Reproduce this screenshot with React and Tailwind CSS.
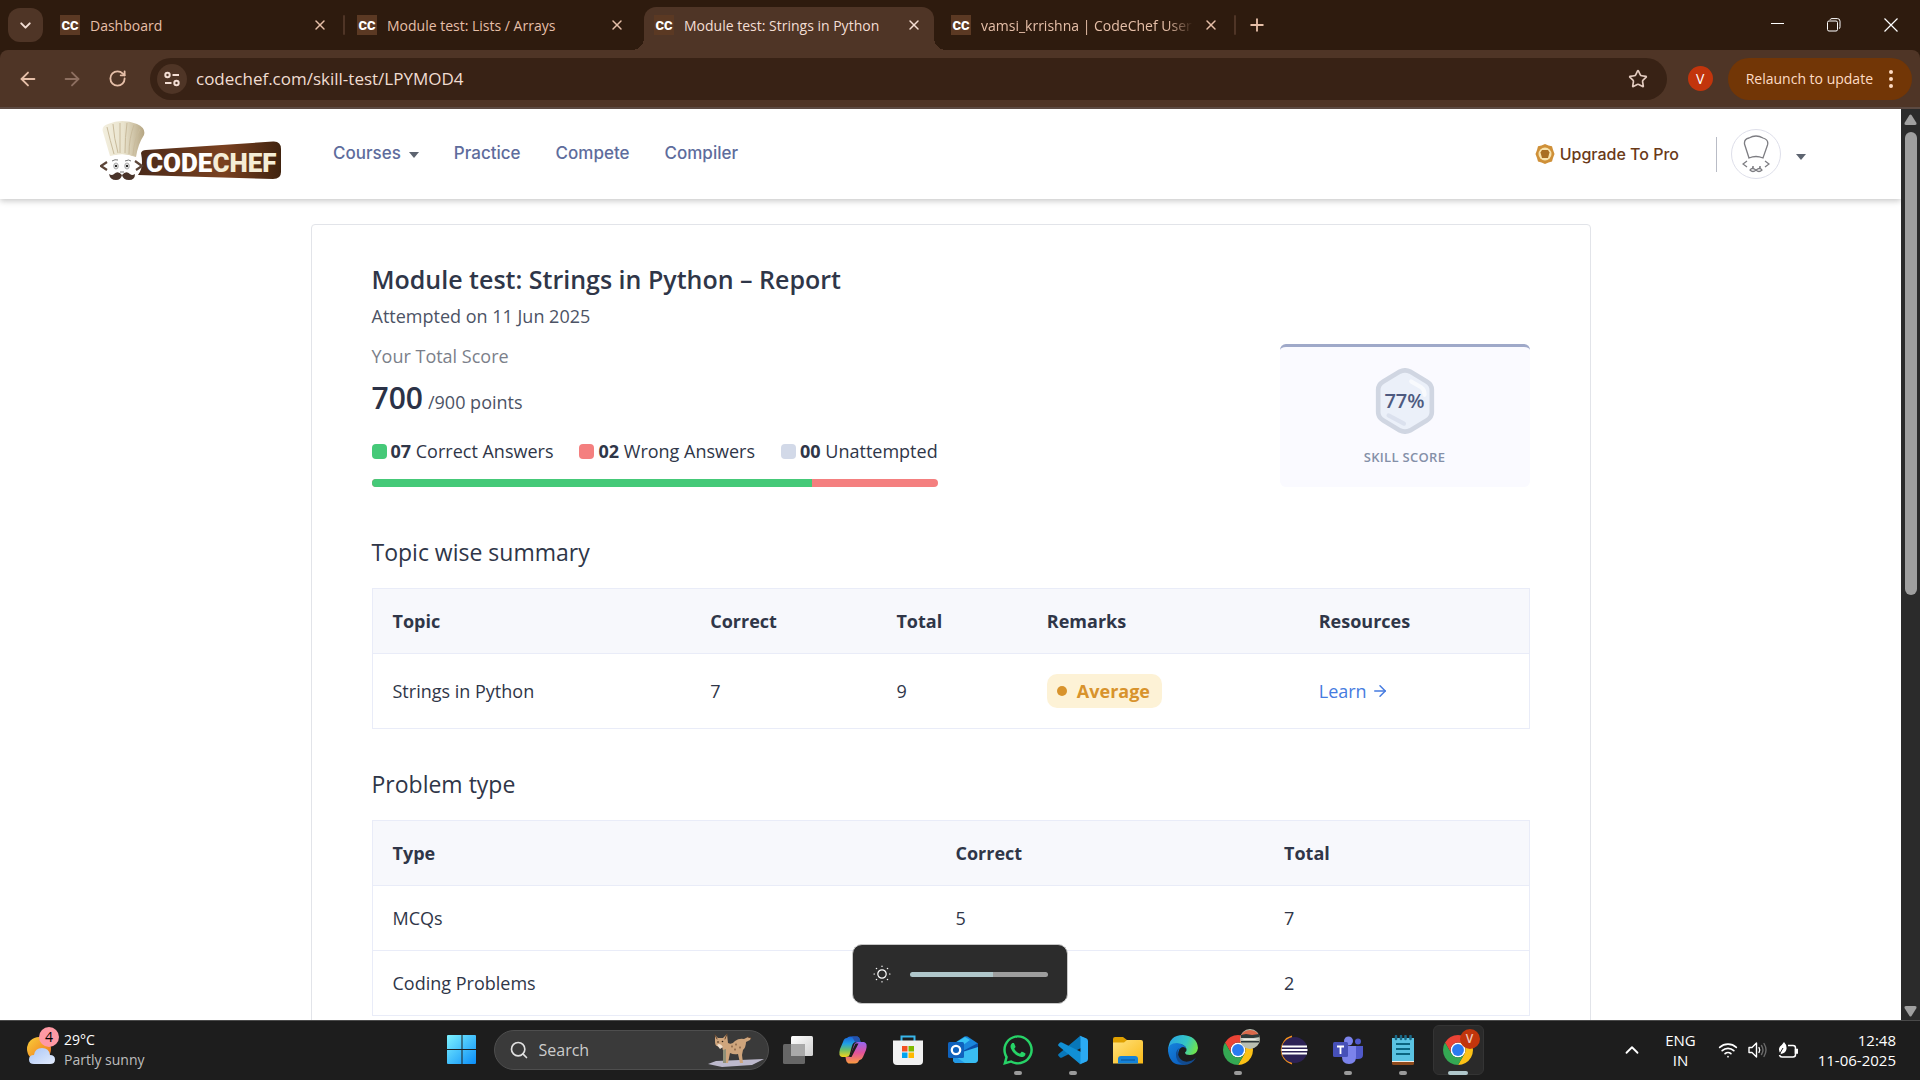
import React from "react";
import { FaWhatsapp } from "react-icons/fa";
import { ArrowLeft, ArrowRight, ChevronDown, ChevronUp, Plus, RotateCw, Search, Star, Wifi, X } from "lucide-react";

const UI = "font-['Open_Sans','Noto_Sans',sans-serif]";

function Favicon() {
  return (
    <span className="flex size-5 shrink-0 items-center justify-center bg-[#5b3923] font-['Roboto',sans-serif] text-[13px] leading-none font-black text-white">
      CC
    </span>
  );
}

function Tab({ title, active, fade }) {
  return (
    <div className={active ? "relative mt-[7px] flex h-[43px] w-[290px] items-center rounded-t-xl bg-[#4f3526] pr-3 pb-[7px] pl-2.5 text-[#f3ded4]" : "relative flex h-[50px] w-[290px] items-center pr-3 pl-2.5 text-[#e6bfa8]"}>
      {active && (
        <>
          <span className="absolute bottom-0 -left-3 size-3 bg-[radial-gradient(circle_at_0_0,transparent_12px,#4f3526_12px)]" />
          <span className="absolute -right-3 bottom-0 size-3 bg-[radial-gradient(circle_at_100%_0,transparent_12px,#4f3526_12px)]" />
        </>
      )}
      <Favicon />
      <span className={fade ? "ml-2.5 flex-1 overflow-hidden pt-px text-sm whitespace-nowrap [mask-image:linear-gradient(to_right,black_88%,transparent)]" : "ml-2.5 flex-1 overflow-hidden pt-px text-sm whitespace-nowrap"}>{title}</span>
      <button aria-label={`Close ${title}`} className="ml-2.5 flex size-4 items-center justify-center">
        <X size={16} strokeWidth={2.2} />
      </button>
    </div>
  );
}

function Divider({ shown }) {
  return <span className="flex w-[7px] shrink-0 justify-center">{shown && <span className="h-5 w-0.5 rounded bg-[#4f3526]" />}</span>;
}

function TabStrip() {
  return (
    <div className="flex h-[50px] items-center bg-[#2e1b0e] pl-2">
      <button aria-label="Search tabs" className="mr-[7px] flex h-[34px] w-[35px] shrink-0 items-center justify-center rounded-xl bg-[#4f3526] text-[#f3ded4]">
        <ChevronDown size={17} strokeWidth={2.8} />
      </button>
      <Tab title="Dashboard" />
      <Divider shown />
      <Tab title="Module test: Lists / Arrays" />
      <Divider />
      <Tab title="Module test: Strings in Python" active />
      <Divider />
      <Tab title="vamsi_krrishna | CodeChef User" fade />
      <Divider shown />
      <button aria-label="New tab" className="ml-[9px] text-[#e6bfa8]">
        <Plus size={20} strokeWidth={2.2} />
      </button>
      <div className="ml-auto flex h-full text-white">
        <button aria-label="Minimize" className="flex w-[56px] items-center justify-center">
          <svg width="14" height="14" viewBox="0 0 14 14"><path d="M0 5.5h13" stroke="currentColor" /></svg>
        </button>
        <button aria-label="Restore" className="flex w-[56px] items-center justify-center">
          <svg width="14" height="14" viewBox="0 0 14 14" fill="none" stroke="currentColor">
            <rect x=".5" y="3" width="10" height="10" rx="1.5" />
            <path d="M3 1.800Q3.400.6 5 .6h5.400Q13 .6 13 3.200v5.600Q13 10.400 12 10.800" />
          </svg>
        </button>
        <button aria-label="Close window" className="flex w-[58px] items-center justify-center">
          <svg width="14" height="14" viewBox="0 0 14 14"><path d="M.5.5l13 13M13.500.5l-13 13" stroke="currentColor" strokeWidth="1.200" /></svg>
        </button>
      </div>
    </div>
  );
}

function Toolbar() {
  return (
    <div className="bg-[#2e1b0e]">
      <div className="flex h-[59px] items-center rounded-t-lg border-b-2 border-[#5c4a42] bg-[#4f3526] pr-2 pl-[17px] text-[#e6bfa8]">
        <button aria-label="Back" className="mr-[22px]"><ArrowLeft size={22} /></button>
        <button aria-label="Forward" className="mr-[25px] text-[#8d6f60]"><ArrowRight size={22} /></button>
        <button aria-label="Reload" className="mr-[23px]"><RotateCw size={19} strokeWidth={2.300} /></button>
        <div className="flex h-[42px] flex-1 items-center rounded-full bg-[#382215] pr-[19px] pl-[7px]">
          <button aria-label="View site information" className="flex size-[30px] items-center justify-center rounded-full bg-[#4f3526]">
            <svg width="18" height="18" viewBox="0 0 18 18" fill="none" stroke="#f3ded4" strokeWidth="2">
              <circle cx="4.500" cy="5" r="2.200" /><path d="M9.500 5H16" />
              <circle cx="13.500" cy="13" r="2.200" /><path d="M2 13h6.500" />
            </svg>
          </button>
          <input aria-label="Address" defaultValue="codechef.com/skill-test/LPYMOD4" className="ml-[9px] min-w-0 flex-1 bg-transparent text-[17px] text-[#f0ddd2] outline-none" />
          <button aria-label="Bookmark this tab" className="text-[#e3cbbf]"><Star size={20} /></button>
        </div>
        <button aria-label="Profile" className="mr-[15px] ml-[21px] flex size-[25px] items-center justify-center rounded-full bg-[#c2350c] text-sm text-white">V</button>
        <button className="flex h-[42px] items-center rounded-full bg-[#723606] pr-[19px] pl-[18px] text-sm text-[#ffdcc5]">
          Relaunch to update
          <svg className="ml-4" width="4" height="18" viewBox="0 0 4 18" fill="currentColor">
            <circle cx="2" cy="2" r="2" /><circle cx="2" cy="9" r="2" /><circle cx="2" cy="16" r="2" />
          </svg>
        </button>
      </div>
    </div>
  );
}

function Logo() {
  return (
    <svg width="182" height="60" viewBox="0 0 182 60" role="img" aria-label="CodeChef">
      <defs>
        <linearGradient id="plate" x1="0" x2="1">
          <stop offset="0" stopColor="#4a2a1a" /><stop offset=".6" stopColor="#7a4120" /><stop offset="1" stopColor="#40230f" />
        </linearGradient>
        <linearGradient id="hat" x1="0" x2="1">
          <stop offset="0" stopColor="#f3efdf" /><stop offset=".5" stopColor="#e9e3cd" /><stop offset="1" stopColor="#b5a582" />
        </linearGradient>
      </defs>
      <path d="M41 33Q42 30 46 30L173 21.500Q181 21 181 29V52Q181 59 173 59L38 55Q44 48 41 33Z" fill="url(#plate)" />
      <path d="M10 36L3 12Q1 6 8 4Q22-2 37 4Q46 8 44 15Q38 24 36 37Q24 33 10 36Z" fill="url(#hat)" />
      <path d="M7 7q3 13 7 27M13 4q1 14 5 29M20 3v30M27 3q-2 14-2 30M34 5q-5 13-5 29M40 9q-6 11-7 26" stroke="#c9bb9c" strokeWidth="1" fill="none" />
      <path d="M12 36Q24 32 34 37Q43 43 40 50Q34 57 24 57Q10 57 9 46Q8 40 12 36Z" fill="#fff" />
      <path d="M7 42L1 46l6 4M35 41l7 5-6 4" stroke="#5b4437" strokeWidth="2.200" fill="none" />
      <ellipse cx="16" cy="46" rx="2.200" ry="3" fill="#fff" stroke="#888" strokeWidth=".8" /><circle cx="16" cy="46" r="1.200" fill="#222" />
      <ellipse cx="27" cy="46" rx="2.200" ry="3" fill="#fff" stroke="#888" strokeWidth=".8" /><circle cx="27" cy="46" r="1.200" fill="#222" />
      <path d="M12 41q3-2 6-1M25 41q4-2 6 0M20 52h4" stroke="#777" fill="none" />
      <path d="M22 55q-4-5-8-1q-2 2-5 0q1 6 7 6q5 0 6-5q1 5 7 5q6 0 6-6q-3 2-5 0q-4-4-8 1Z" fill="#4a342a" />
      <text x="46" y="52" fontFamily="Roboto, sans-serif" fontSize="26" fontWeight="900" fill="#fff">CODE<tspan fill="#f5edd6">CHEF</tspan></text>
    </svg>
  );
}

function Caret() {
  return <svg className="mt-0.5" width="10" height="6" viewBox="0 0 10 6" fill="#5d6470"><path d="M0 0h10L5 6z" /></svg>;
}

function SiteNav() {
  return (
    <header className="relative z-10 flex h-[90px] shrink-0 items-center bg-white pr-[95px] pl-[100px] font-['Inter',sans-serif] font-medium text-[#5e6c9c] shadow-[0_2px_6px_rgba(0,0,0,0.22)]">
      <a href="#home" className="mb-2"><Logo /></a>
      <nav className="ml-[51px] flex items-center gap-[35px] text-[17px]">
        <a href="#courses" className="flex items-center gap-2">Courses<Caret /></a>
        <a href="#practice">Practice</a>
        <a href="#compete">Compete</a>
        <a href="#compiler">Compiler</a>
      </nav>
      <a href="#pro" className="ml-auto flex items-center gap-[5px] text-base text-[#6a3a18]">
        <svg width="20" height="20" viewBox="0 0 20 20">
          <path d="M10 0l3.500 1.500 3.500.8 1 3.500L19.500 10 18 14l-1 3.500-3.500 1L10 20l-3.500-1.500L3 17.500 2 14 .5 10 2 6l1-3.700 3.500-.8z" fill="#cf9038" />
          <circle cx="10" cy="10" r="6.500" fill="#f8e3ad" />
          <path d="M7 6h6l1.500 2.500L13 14H7L5.500 8.500z" fill="#a96e22" />
        </svg>
        Upgrade To Pro
      </a>
      <span className="mr-3.5 ml-[37px] h-[35px] w-px bg-[#b9bcc6]" />
      <button aria-label="Account menu" className="flex items-center gap-[15px]">
        <span className="flex size-[50px] items-center justify-center rounded-full border border-[#dedfea] bg-white">
          <svg width="28" height="38" viewBox="0 0 28 38" fill="none" stroke="#7d7d82" strokeWidth="1.300">
            <path d="M7 23L2.500 9Q2 4 7 3Q14-1 21 3Q27 5 25.500 10L21 23Q14 20 7 23Z" />
            <path d="M5 26l-4 3 4 3M23 26l4 3-4 3M14 35q-4-3-6 0 3 3 6 0 3 3 6 0-2-3-6 0M10 32h2M17 32h2" />
          </svg>
        </span>
        <span className="pt-1"><Caret /></span>
      </button>
    </header>
  );
}

const LEGEND = [
  { count: "07", label: "Correct Answers", color: "bg-[#45c978]" },
  { count: "02", label: "Wrong Answers", color: "bg-[#f47f7f]" },
  { count: "00", label: "Unattempted", color: "bg-[#d2d9e8]" },
];

function SkillScore() {
  return (
    <div className="flex h-[143px] w-[250px] flex-col items-center rounded-md border-t-3 border-[#9fa9c9] bg-[#fafaff] pt-[21px]">
      <div className="grid place-items-center">
        <svg className="col-start-1 row-start-1" width="64" height="66" viewBox="0 0 60 64">
          <path d="M25 3.500Q30 1 35 3.500L51 13Q56 16 56 21V43Q56 48 51 51L35 60.500Q30 63 25 60.500L9 51Q4 48 4 43V21Q4 16 9 13Z" fill="#ebf0f9" stroke="#d0d6e2" strokeWidth="4.500" />
          <path d="M36 13l10 6q3 2 3 7" stroke="#f8fafd" strokeWidth="4" strokeLinecap="round" fill="none" />
          <path d="M14 46l15 8" stroke="#dbe1ee" strokeWidth="4" strokeLinecap="round" />
        </svg>
        <span className="z-10 col-start-1 row-start-1 text-xl leading-6 font-semibold text-[#4d5a80]">77%</span>
      </div>
      <span className="mt-[13px] text-[13px] leading-5 font-semibold tracking-wide text-[#8490a8]">SKILL SCORE</span>
    </div>
  );
}

const TH = "px-5 py-5 text-left leading-6 font-bold";
const TD = "px-5 py-5 leading-6";

function Report() {
  return (
    <main className="mx-auto mt-[25px] w-full max-w-7xl shrink-0 rounded border border-[#e2e4e9] bg-white px-[60px] pt-9 pb-16 font-['Open_Sans',sans-serif] text-lg text-[#2f3648]">
      <div className="flex items-end justify-between">
        <section>
          <h1 className="text-[25px] leading-9 font-semibold text-[#2f3648]">Module test: Strings in Python – Report</h1>
          <p className="mt-[5px] leading-7 text-[#4c5365]">Attempted on 11 Jun 2025</p>
          <p className="mt-3 leading-7 text-[#7b7f8a]">Your Total Score</p>
          <p className="mt-2 flex h-10 items-baseline gap-[5px] text-[#4c5365]">
            <strong className="text-[30px] leading-10 font-semibold text-[#2b3247]">700</strong>
            <span>/900 points</span>
          </p>
          <ul className="mt-[19px] flex gap-[26px] leading-7">
            {LEGEND.map((item) => (
              <li key={item.label} className="flex items-center">
                <span className={`mr-1 size-[15px] rounded ${item.color}`} />
                <b>{item.count}</b>&nbsp;{item.label}
              </li>
            ))}
          </ul>
          <div className="mt-3.5 flex h-2 overflow-hidden rounded bg-[#f47f7f]">
            <div className="w-7/9 bg-[#45c978]" />
          </div>
        </section>
        <SkillScore />
      </div>

      <h2 className="mt-[47px] mb-[18px] text-[23px] leading-9 font-medium">Topic wise summary</h2>
      <table className="w-full table-fixed border-collapse border border-[#e9ecf8]">
        <thead className="bg-[#f7f8fc]">
          <tr className="border-b border-[#e9ecf8]">
            <th className={`w-[27.500%] ${TH}`}>Topic</th>
            <th className={`w-[16.100%] ${TH}`}>Correct</th>
            <th className={`w-[13%] ${TH}`}>Total</th>
            <th className={`w-[23.500%] ${TH}`}>Remarks</th>
            <th className={TH}>Resources</th>
          </tr>
        </thead>
        <tbody>
          <tr>
            <td className={TD}>Strings in Python</td>
            <td className={TD}>7</td>
            <td className={TD}>9</td>
            <td className={TD}>
              <span className="flex h-[34px] w-fit items-center gap-2.5 rounded-[10px] bg-[#fdf2d6] pr-3 pl-2.5 font-bold text-[#d8932c]">
                <span className="size-2.5 rounded-full bg-[#d8932c]" />Average
              </span>
            </td>
            <td className={TD}>
              <a href="#learn" className="flex items-center gap-1 text-[#467be0]">Learn <ArrowRight size={18} /></a>
            </td>
          </tr>
        </tbody>
      </table>

      <h2 className="mt-[37px] mb-[18px] text-[23px] leading-9 font-medium">Problem type</h2>
      <table className="w-full table-fixed border-collapse border border-[#e9ecf8]">
        <thead className="bg-[#f7f8fc]">
          <tr className="border-b border-[#e9ecf8]">
            <th className={`w-[48.700%] ${TH}`}>Type</th>
            <th className={`w-[28.400%] ${TH}`}>Correct</th>
            <th className={TH}>Total</th>
          </tr>
        </thead>
        <tbody>
          <tr className="border-b border-[#e9ecf8]">
            <td className={TD}>MCQs</td><td className={TD}>5</td><td className={TD}>7</td>
          </tr>
          <tr>
            <td className={TD}>Coding Problems</td><td className={TD}>2</td><td className={TD}>2</td>
          </tr>
        </tbody>
      </table>
    </main>
  );
}

function Scrollbar() {
  return (
    <div className="flex w-[19px] shrink-0 flex-col items-center bg-[#2b2b2b] pt-[5px] pb-[3px]">
      <svg width="13" height="11" viewBox="0 0 13 11" fill="#a0a0a0"><path d="M5.500 1Q6.500 0 7.500 1L12.500 9Q13 11 11 11H2Q0 11 .5 9Z" /></svg>
      <div className="mt-[7px] flex w-3 flex-1 flex-col"><div className="h-[53%] rounded-full bg-[#9f9f9f]" /></div>
      <svg width="13" height="11" viewBox="0 0 13 11" fill="#a0a0a0"><path d="M5.500 10Q6.500 11 7.500 10L12.500 2Q13 0 11 0H2Q0 0 .5 2Z" /></svg>
    </div>
  );
}

function BrightnessFlyout() {
  return (
    <label className="absolute bottom-[76px] left-1/2 z-20 flex h-[60px] w-[216px] -translate-x-1/2 items-center gap-[19px] rounded-[10px] border border-[#c8c8c8] bg-[#2c2c2c] pr-[19px] pl-5">
      <svg width="18" height="18" viewBox="0 0 18 18" fill="none" stroke="#fff" strokeWidth="1.200" aria-label="Brightness">
        <circle cx="9" cy="9" r="4.200" />
        <path d="M9 1V1.500M9 16.500v.5M1 9h.5M16.500 9h.5M3.300 3.300l.4.4M14.300 14.300l.4.4M14.700 3.300l-.4.4M3.700 14.300l-.4.4" strokeLinecap="round" />
      </svg>
      <input type="range" defaultValue="60" className="h-[5px] min-w-0 flex-1 appearance-none rounded-full bg-[linear-gradient(to_right,#b0c7cb_60%,#9e9e9e_60%)] [&::-webkit-slider-thumb]:size-0 [&::-webkit-slider-thumb]:appearance-none" />
    </label>
  );
}

function ChromeIcon() {
  return (
    <svg width="30" height="30" viewBox="0 0 48 48">
      <circle cx="24" cy="24" r="12" fill="#fff" />
      <path d="M24 12H44.780A24 24 0 0 0 3.220 12L13.610 30A12 12 0 0 1 24 12Z" fill="#ea4335" />
      <path d="M34.390 30L24 48A24 24 0 0 0 44.780 12H24A12 12 0 0 1 34.390 30Z" fill="#fbc116" />
      <path d="M13.610 30L3.220 12A24 24 0 0 0 24 48L34.390 30A12 12 0 0 1 13.610 30Z" fill="#34a853" />
      <circle cx="24" cy="24" r="9.500" fill="#2a7bf0" />
    </svg>
  );
}

function WindowsIcon() {
  return (
    <svg width="30" height="30" viewBox="0 0 30 30">
      <defs><linearGradient id="win" x2="1" y2="1"><stop stopColor="#7df3ff" /><stop offset="1" stopColor="#0a8df8" /></linearGradient></defs>
      <path d="M1 0h13.500v14H0V1q0-1 1-1ZM15.500 0H28q1 0 1 1v13H15.500ZM0 15h14.500v14H1q-1 0-1-1ZM15.500 15H29v13q0 1-1 1H15.500Z" fill="url(#win)" />
    </svg>
  );
}

function TaskViewIcon() {
  return (
    <svg width="30" height="30" viewBox="0 0 30 30">
      <defs><linearGradient id="tv" x2="1" y2="1"><stop stopColor="#fff" /><stop offset="1" stopColor="#cfcfcf" /></linearGradient></defs>
      <rect y="9" width="22" height="20" rx="1.500" fill="#666" />
      <rect x="8" y="1" width="22" height="20" rx="1.500" fill="url(#tv)" />
      <path d="M8 9h14v12H8z" fill="#a9a9a9" />
    </svg>
  );
}

function CopilotIcon() {
  return (
    <svg width="30" height="30" viewBox="0 0 30 30">
      <defs>
        <linearGradient id="cpa" x2="0" y2="1"><stop stopColor="#1b62d8" /><stop offset=".35" stopColor="#1fa0e6" /><stop offset=".65" stopColor="#69bf6a" /><stop offset="1" stopColor="#f5d41b" /></linearGradient>
        <linearGradient id="cpb" x2="0" y2="1"><stop stopColor="#9467f2" /><stop offset=".5" stopColor="#e2529a" /><stop offset="1" stopColor="#fb9b3f" /></linearGradient>
      </defs>
      <path d="M9 3Q10 1.500 12 1.500H19.500Q21.500 2 22 5L22.500 7H18Q15 7 14 11L11.500 20Q11 22 8 22H4Q0 21 2 14L5 7Q6 3 9 3Z" fill="url(#cpa)" />
      <path d="M21 25.500Q20 28.500 17 28.500H10.500Q8.500 28 8 25L7.500 22H9Q12 22 13 19L16 10Q17 7 20 7H26Q30 8 28 15L25 22Q24 25 21 25.500Z" fill="url(#cpb)" />
      <path d="M17.500 8.500h3L13.500 22H11z" fill="#1d1d1d" />
      <path d="M14 1.500h5.500Q21.500 2 22 5l.5 2H17Z" fill="#2452ad" />
    </svg>
  );
}

function StoreIcon() {
  return (
    <svg width="30" height="32" viewBox="0 0 30 32">
      <path d="M8.500 8V2.500h13V8" fill="none" stroke="#38b6ea" strokeWidth="2" />
      <path d="M0 6.500h30V27q0 4-4 4H4q-4 0-4-4Z" fill="#f1f1f1" />
      <path d="M9 12h5.500v5.500H9z" fill="#f25022" /><path d="M15.500 12H21v5.500h-5.500z" fill="#7fba00" />
      <path d="M9 18.500h5.500V24H9z" fill="#00a4ef" /><path d="M15.500 18.500H21V24h-5.500z" fill="#ffb900" />
    </svg>
  );
}

function OutlookIcon() {
  return (
    <svg width="30" height="30" viewBox="0 0 30 30">
      <path d="M5 9L16.500 1.500Q18 .8 19.500 1.500L30 8.500V24q0 4-4 4H9q-4 0-4-4Z" fill="#1a86dc" />
      <path d="M8 7.500L17 2l5 3L11 13z" fill="#37c2f4" /><path d="M13 17L30 8v5L16 22z" fill="#0a4fa8" />
      <path d="M5 20l25-8v12q0 4-4 4H9q-4 0-4-4Z" fill="#39bdf2" /><path d="M5 20l12 8H9q-4 0-4-4Z" fill="#2298e5" />
      <rect y="7" width="16" height="16" rx="1.500" fill="#0f62bd" />
      <circle cx="8" cy="15" r="4.200" fill="none" stroke="#fff" strokeWidth="2.300" />
    </svg>
  );
}

function VsCodeIcon() {
  return (
    <svg width="30" height="30" viewBox="0 0 30 30">
      <path d="M22 1L29 4v6L4 22.500q-1 .6-2 0L.6 21q-1-1 0-2Z" fill="#0877b9" />
      <path d="M22 29l7-3v-6L4 7.500q-1-.6-2 0L.6 9q-1 1 0 2Z" fill="#1190d6" />
      <path d="M21.500 0.500L28.500 3.500Q30 4.200 30 6V24q0 1.800-1.500 2.500L21.500 29.500Q22.500 29 22.500 27V3q0-2-1-2.500Z" fill="#2baaf3" />
    </svg>
  );
}

function FolderIcon() {
  return (
    <svg width="30" height="28" viewBox="0 0 30 28">
      <defs><linearGradient id="fold" x2="1" y2="1"><stop stopColor="#ffe27d" /><stop offset="1" stopColor="#f9b916" /></linearGradient></defs>
      <path d="M0 3q0-2 2-2h8l4 3h8v6H0z" fill="#dfa000" />
      <path d="M0 6.500h11l3-2.500h14q2 0 2 2v21.500H0z" fill="url(#fold)" />
      <path d="M5 27.500V23q0-3 3-3h14q3 0 3 3v4.500z" fill="#1482d8" /><path d="M8 24h14" stroke="#0b5a9e" strokeWidth="1.200" />
    </svg>
  );
}

function EdgeIcon() {
  return (
    <svg width="30" height="30" viewBox="0 0 30 30">
      <defs>
        <linearGradient id="eg" x2="1" y1=".2" y2=".5"><stop stopColor="#2aa4e6" /><stop offset=".6" stopColor="#34c6c4" /><stop offset="1" stopColor="#6ee24f" /></linearGradient>
        <linearGradient id="eb" x2=".7" y2="1"><stop stopColor="#1683dc" /><stop offset="1" stopColor="#0b5fc0" /></linearGradient>
      </defs>
      <path d="M0 15Q1 0 15 0Q29 1 30 13Q29 20 22 20Q17 20 17 17.500Q19 16 18.500 14Q17 9 10 9Q2 9 0 15Z" fill="url(#eg)" />
      <path d="M0 16Q0 8 9 8Q17 9 18.500 14Q15 10 11.500 14Q7 24 17 29.500Q2 32 0 16Z" fill="url(#eb)" />
      <path d="M11.500 13Q8 17 11 22Q15 29 24 25.500Q26 24.500 28 22.500Q24 30 16 30Q7 27 8 18Q9 14 11.500 13Z" fill="#124b8f" />
    </svg>
  );
}

function EclipseIcon() {
  return (
    <svg width="30" height="30" viewBox="0 0 30 30">
      <path d="M14 1.500A14 14 0 0 0 14 28.500" fill="none" stroke="#f7941e" strokeWidth="2" />
      <circle cx="16.500" cy="15" r="13" fill="#2c2255" />
      <path d="M4 11.500h25M3.500 15h26M4 18.500h25" stroke="#fff" strokeWidth="1.800" />
    </svg>
  );
}

function TeamsIcon() {
  return (
    <svg width="30" height="30" viewBox="0 0 30 30">
      <circle cx="25" cy="6.500" r="3" fill="#5059c9" /><path d="M21 11h9v9q0 4-5 4h-4z" fill="#5059c9" />
      <circle cx="15.500" cy="6" r="4.500" fill="#7b83eb" /><path d="M9 11h14v11q0 7-7 7t-7-7z" fill="#7b83eb" />
      <rect y="7" width="15" height="15" rx="1.500" fill="#4650b8" />
      <path d="M4 11.500h7M7.500 11.500V19" stroke="#fff" strokeWidth="1.800" />
    </svg>
  );
}

function NotepadIcon() {
  return (
    <svg width="22" height="30" viewBox="0 0 22 30">
      <rect y="24" width="22" height="6" rx="1.500" fill="#8e4a1c" /><path d="M0 24h22v3H0z" fill="#f2ece6" />
      <path d="M0 3h22v23H0z" fill="#5ac3e2" />
      <path d="M4 1v3M9 1v3M13.500 1v3M18.500 1v3" stroke="#1a6a88" strokeWidth="2.500" strokeLinecap="round" />
      <path d="M4 9h14M4 14h14M4 19h14" stroke="#0b6580" strokeWidth="1.800" />
    </svg>
  );
}

function LynxArt() {
  return (
    <svg width="56" height="34" viewBox="0 0 56 34">
      <path d="M0 31L8 28 56 26 44 32 14 34Z" fill="#bdb9cc" />
      <path d="M7 2L10 5h5L19 1l1 9q4 2 7-2 4-3 9-2l4-2 3 1-1 2-4 2q0 5-3 8l-1 5 1 8h-3l-2-9q-4 1-8-1l-2 10h-4l1-10q-3-3-3-7Q7 15 7 9Z" fill="#cfa57c" />
      <path d="M15 17l3-1v14h-3z" fill="#8f9078" /><path d="M9 12q3-3 6 2l-3 2z" fill="#f0dfcd" />
      <circle cx="10" cy="9" r=".8" fill="#302015" /><circle cx="14.500" cy="8.500" r=".8" fill="#302015" />
      <path d="M7 2l2 4M19 1l-2 5M24 13v1M28 11v1M32 14v1M27 16v1M40 4l3 1" stroke="#5f3f28" strokeLinecap="round" />
    </svg>
  );
}

function WeatherIcon() {
  return (
    <span className="relative block h-[30px] w-[30px]">
      <svg width="28" height="30" viewBox="0 0 28 30">
        <defs>
          <linearGradient id="sun" x2="1" y2="1"><stop stopColor="#f8cf3a" /><stop offset="1" stopColor="#f06d1a" /></linearGradient>
          <linearGradient id="cl" x2="1" y2="1"><stop stopColor="#a9c5f6" /><stop offset="1" stopColor="#e3ecfd" /></linearGradient>
        </defs>
        <circle cx="12" cy="14" r="12" fill="url(#sun)" />
        <path d="M7 29Q2 29 2 24.500T7 20Q8 13 15 13t8 7q5 0 5 4.500T23 29Z" fill="url(#cl)" />
      </svg>
      <span className="absolute -top-2 -right-0.5 flex size-5 items-center justify-center rounded-full bg-[#ff99a4] text-sm leading-none text-black">4</span>
    </span>
  );
}

function TaskButton({ label, running, active, badge, children }) {
  return (
    <button aria-label={label} className="relative flex h-[50px] w-[55px] items-center justify-center">
      {active && <span className="absolute inset-x-0.5 inset-y-0 rounded-md border border-[#343434] bg-[#2a2a2a]" />}
      <span className="relative">{children}</span>
      {badge}
      {running && <span className="absolute bottom-0 h-1 w-2 rounded-full bg-[#9a9a9a]" />}
      {active && <span className="absolute bottom-0 h-1 w-5 rounded-full bg-[#b0c7cb]" />}
    </button>
  );
}

function Taskbar() {
  return (
    <footer className="grid h-[60px] shrink-0 grid-cols-[1fr_auto_1fr] items-center border-t border-[#4a4a4a] bg-[#1d1d1d] pb-px text-white">
      <button className="flex items-center gap-[7px] justify-self-start pl-[27px] text-left text-sm">
        <WeatherIcon />
        <span className="leading-5"><span className="block">29°C</span><span className="block text-[#bdbdbd]">Partly sunny</span></span>
      </button>
      <div className="flex items-center">
        <TaskButton label="Start"><WindowsIcon /></TaskButton>
        <label className="mr-0.5 ml-1 flex h-10 w-[275px] items-center rounded-full border border-[#4e4e4e] bg-[#3a3a3a] pr-1 pl-3.5">
          <Search size={20} className="shrink-0 text-[#e0e0e0]" />
          <input type="search" placeholder="Search" className="ml-2.5 min-w-0 flex-1 bg-transparent text-base outline-none placeholder:text-[#cccccc]" />
          <LynxArt />
        </label>
        <TaskButton label="Task view"><TaskViewIcon /></TaskButton>
        <TaskButton label="Copilot"><CopilotIcon /></TaskButton>
        <TaskButton label="Microsoft Store"><StoreIcon /></TaskButton>
        <TaskButton label="Outlook"><OutlookIcon /></TaskButton>
        <TaskButton label="WhatsApp" running><FaWhatsapp size={34} color="#27d367" /></TaskButton>
        <TaskButton label="Visual Studio Code" running><VsCodeIcon /></TaskButton>
        <TaskButton label="File Explorer"><FolderIcon /></TaskButton>
        <TaskButton label="Edge"><EdgeIcon /></TaskButton>
        <TaskButton
          label="Chrome"
          running
          badge={
            <svg className="absolute top-1 right-1.5" width="20" height="20" viewBox="0 0 20 20">
              <circle cx="10" cy="10" r="10" fill="#b9bfb2" />
              <path d="M.5 8A10 10 0 0 1 19.500 8Z" fill="#d9694b" /><path d="M1 6l5-1 6 1 7-1 .5 3-6 1H1z" fill="#2f3a3a" /><path d="M1 9.500h18l-4 1.500H4z" fill="#e9ece8" />
              <path d="M1 12h18v1.500H1z" fill="#2c3638" />
            </svg>
          }
        >
          <ChromeIcon />
        </TaskButton>
        <TaskButton label="Eclipse"><EclipseIcon /></TaskButton>
        <TaskButton label="Teams" running><TeamsIcon /></TaskButton>
        <TaskButton label="Notepad" running><NotepadIcon /></TaskButton>
        <TaskButton
          label="Chrome, profile V"
          active
          badge={<span className="absolute top-1 right-1.5 flex size-5 items-center justify-center rounded-full bg-[#c2350c] text-xs leading-none font-semibold text-[#f0c9ba]">V</span>}
        >
          <ChromeIcon />
        </TaskButton>
      </div>
      <div className="flex items-center justify-self-end pr-6 text-[15px]">
        <button aria-label="Show hidden icons"><ChevronUp size={22} /></button>
        <button className="ml-[22px] text-center leading-5"><span className="block">ENG</span><span className="block">IN</span></button>
        <button aria-label="Network, sound and battery" className="mr-5 ml-[22px] flex items-center gap-2.5">
          <Wifi size={20} />
          <svg width="20" height="18" viewBox="0 0 20 18" fill="none" stroke="#fff" strokeWidth="1.400" strokeLinejoin="round" strokeLinecap="round">
            <path d="M1 6.500h3L8.500 2v14L4 11.500H1z" /><path d="M11 6.500q1.500 2.500 0 5" />
            <path d="M13.500 4.500q3 4.500 0 9M16 2.500q4 6.500 0 13" stroke="#6b6b6b" />
          </svg>
          <svg width="20" height="18" viewBox="0 0 20 18" fill="none" stroke="#fff" strokeWidth="1.500">
            <path d="M10 4.500h5q2.500 0 2.500 2.500v6.500q0 2.500-2.500 2.500H4q-2 0-2.500-2" /><path d="M17.500 8.500H19.500v3.500h-2z" fill="#fff" />
            <path d="M6 1Q9 4 8.500 8T3 13Q-.5 9 2 5.500 4 4 6 1Z" fill="#fff" stroke="none" /><path d="M5 7L1 14" stroke="#1d1d1d" strokeWidth="1" />
          </svg>
        </button>
        <button className="text-right leading-5"><span className="block">12:48</span><span className="block">11-06-2025</span></button>
      </div>
    </footer>
  );
}

export default function App() {
  return (
    <div className={`relative flex h-screen flex-col overflow-hidden bg-white ${UI}`}>
      <TabStrip />
      <Toolbar />
      <div className="flex min-h-0 flex-1">
        <div className="flex min-w-0 flex-1 flex-col overflow-hidden">
          <SiteNav />
          <Report />
        </div>
        <Scrollbar />
      </div>
      <BrightnessFlyout />
      <Taskbar />
    </div>
  );
}
